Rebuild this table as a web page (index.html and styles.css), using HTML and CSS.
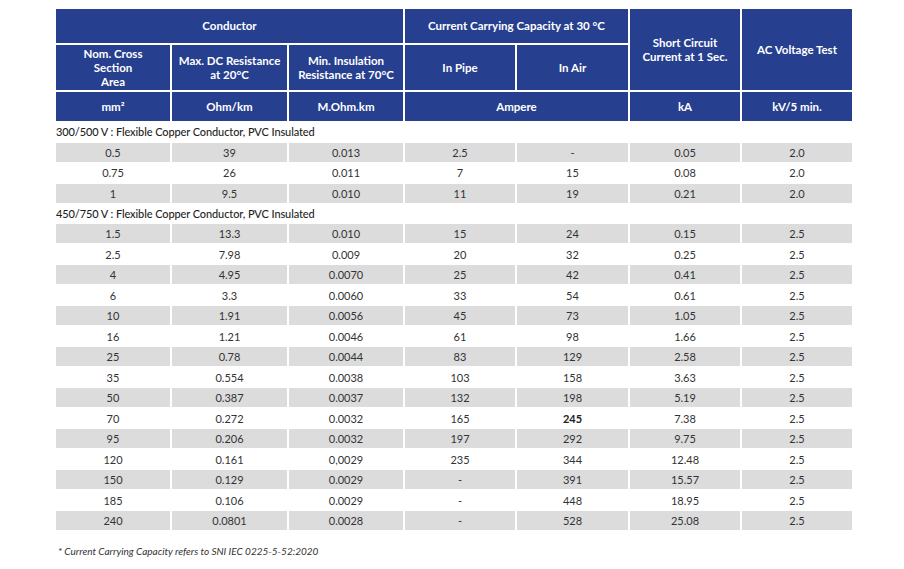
FILE: index.html
```html
<!DOCTYPE html>
<html lang="en">
<head>
<meta charset="utf-8">
<title>Cable Specification</title>
<link rel="stylesheet" href="styles.css">
</head>
<body>
<div class="wrap">
  <div class="thead">
    <div class="th c-cond">Conductor</div>
    <div class="th c-ccc">Current Carrying Capacity at 30 °C</div>
    <div class="th c-sc">Short Circuit<br>Current at 1 Sec.</div>
    <div class="th c-ac">AC Voltage Test</div>
    <div class="th">Nom. Cross<br>Section<br>Area</div>
    <div class="th">Max. DC Resistance<br>at 20°C</div>
    <div class="th">Min. Insulation<br>Resistance at 70°C</div>
    <div class="th">In Pipe</div>
    <div class="th">In Air</div>
    <div class="th">mm²</div>
    <div class="th">Ohm/km</div>
    <div class="th">M.Ohm.km</div>
    <div class="th c-amp">Ampere</div>
    <div class="th">kA</div>
    <div class="th">kV/5 min.</div>
  </div>

  <div class="section s1">300/500 V : Flexible Copper Conductor, PVC Insulated</div>
  <div class="row alt"><div>0.5</div><div>39</div><div>0.013</div><div>2.5</div><div>-</div><div>0.05</div><div>2.0</div></div>
  <div class="row"><div>0.75</div><div>26</div><div>0.011</div><div>7</div><div>15</div><div>0.08</div><div>2.0</div></div>
  <div class="row alt"><div>1</div><div>9.5</div><div>0.010</div><div>11</div><div>19</div><div>0.21</div><div>2.0</div></div>

  <div class="section s2">450/750 V : Flexible Copper Conductor, PVC Insulated</div>
  <div class="row alt"><div>1.5</div><div>13.3</div><div>0.010</div><div>15</div><div>24</div><div>0.15</div><div>2.5</div></div>
  <div class="row"><div>2.5</div><div>7.98</div><div>0.009</div><div>20</div><div>32</div><div>0.25</div><div>2.5</div></div>
  <div class="row alt"><div>4</div><div>4.95</div><div>0.0070</div><div>25</div><div>42</div><div>0.41</div><div>2.5</div></div>
  <div class="row"><div>6</div><div>3.3</div><div>0.0060</div><div>33</div><div>54</div><div>0.61</div><div>2.5</div></div>
  <div class="row alt"><div>10</div><div>1.91</div><div>0.0056</div><div>45</div><div>73</div><div>1.05</div><div>2.5</div></div>
  <div class="row"><div>16</div><div>1.21</div><div>0.0046</div><div>61</div><div>98</div><div>1.66</div><div>2.5</div></div>
  <div class="row alt"><div>25</div><div>0.78</div><div>0.0044</div><div>83</div><div>129</div><div>2.58</div><div>2.5</div></div>
  <div class="row"><div>35</div><div>0.554</div><div>0.0038</div><div>103</div><div>158</div><div>3.63</div><div>2.5</div></div>
  <div class="row alt"><div>50</div><div>0.387</div><div>0.0037</div><div>132</div><div>198</div><div>5.19</div><div>2.5</div></div>
  <div class="row"><div>70</div><div>0.272</div><div>0.0032</div><div>165</div><div class="strong">245</div><div>7.38</div><div>2.5</div></div>
  <div class="row alt"><div>95</div><div>0.206</div><div>0.0032</div><div>197</div><div>292</div><div>9.75</div><div>2.5</div></div>
  <div class="row"><div>120</div><div>0.161</div><div>0,0029</div><div>235</div><div>344</div><div>12.48</div><div>2.5</div></div>
  <div class="row alt"><div>150</div><div>0.129</div><div>0.0029</div><div>-</div><div>391</div><div>15.57</div><div>2.5</div></div>
  <div class="row"><div>185</div><div>0.106</div><div>0.0029</div><div>-</div><div>448</div><div>18.95</div><div>2.5</div></div>
  <div class="row alt"><div>240</div><div>0.0801</div><div>0.0028</div><div>-</div><div>528</div><div>25.08</div><div>2.5</div></div>

  <p class="note">* Current Carrying Capacity refers to SNI IEC 0225-5-52:2020</p>
</div>
</body>
</html>
```
FILE: styles.css
```css
html, body {
  margin: 0;
  padding: 0;
  background: #ffffff;
}

body {
  font-family: Lato, "Open Sans", "Liberation Sans", sans-serif;
  font-size: 11px;
  color: #333333;
}

.wrap {
  width: 796px;
  margin-left: 56px;
  padding-top: 9px;
}

.thead {
  display: grid;
  grid-template-columns: 114px 115px 114px 110px 111px 110px 110px;
  grid-template-rows: 34px 45px 29px;
  gap: 2px;
}

.th {
  background: #263f8f;
  color: #ffffff;
  font-weight: 700;
  font-size: 11.5px;
  line-height: 14px;
  text-align: center;
  display: flex;
  align-items: center;
  justify-content: center;
}

.c-cond { grid-column: 1 / 4; }
.c-ccc { grid-column: 4 / 6; }
.c-sc { grid-column: 6; grid-row: 1 / 3; }
.c-ac { grid-column: 7; grid-row: 1 / 3; }
.c-amp { grid-column: 4 / 6; }

.section {
  color: #1f1f1f;
  font-weight: 500;
  display: flex;
  align-items: center;
  letter-spacing: -0.1px;
}

.s1 { height: 21px; }
.s2 { height: 20px; }

.row {
  display: grid;
  grid-template-columns: 114px 115px 114px 110px 111px 110px 110px;
  column-gap: 2px;
  height: 20.5px;
  align-items: center;
}

.row > div {
  height: 19px;
  line-height: 19px;
  text-align: center;
}

.row.alt > div {
  background: #dcdcdd;
}

.row .strong {
  font-weight: 700;
  color: #222222;
}

.note {
  margin: 14px 0 0 2px;
  font-style: italic;
  font-size: 10px;
  line-height: 12px;
  color: #333333;
}
```
